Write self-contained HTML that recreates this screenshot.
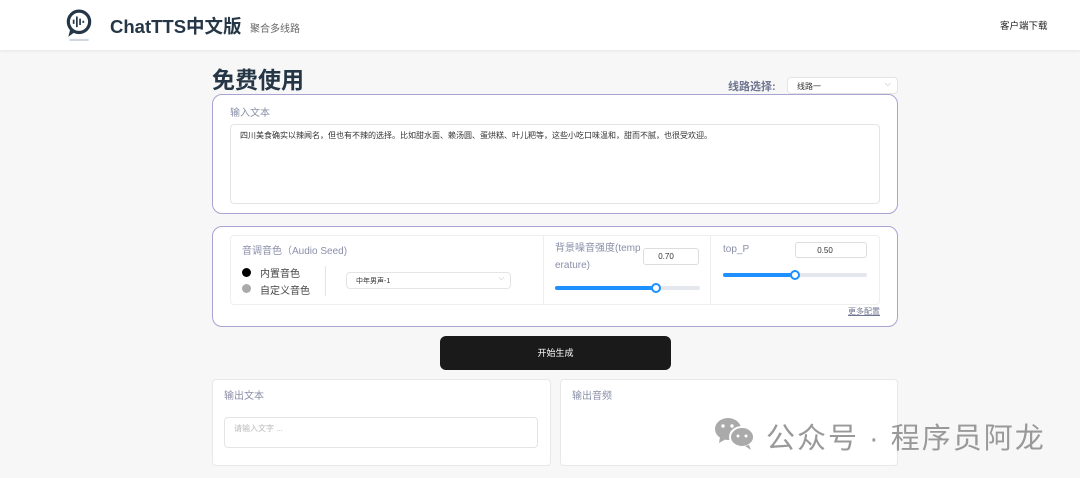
<!DOCTYPE html>
<html><head><meta charset="utf-8"><style>
*{box-sizing:border-box;margin:0;padding:0}
body{width:1080px;height:478px;overflow:hidden;background:#f7f7f7;font-family:"Liberation Sans","Noto Sans CJK SC",sans-serif;position:relative;color:#333}
.abs{position:absolute}
.hdr{left:0;top:0;width:1080px;height:50px;background:#fff;box-shadow:0 1px 3px rgba(0,0,0,.08)}
.card{background:#fff;border:1px solid #a9a4cf;border-radius:10px}
.box{background:#fff;border:1px solid #e4e4e4;border-radius:4px}
.lbl{font-size:10px;color:#8a8fa8}
.track{height:4px;border-radius:2px;background:#e4e7ed}
.fill{height:4px;border-radius:2px;background:#1e90ff}
.knob{width:10px;height:10px;border:2px solid #1e90ff;background:#fff;border-radius:50%}
.num{font-size:8px;border:1px solid #ddd;border-radius:3px;background:#fff;text-align:center;line-height:16px}
</style></head><body>
<div class="abs hdr"></div>
<svg class="abs" style="left:65px;top:9px" width="28" height="32" viewBox="0 0 26 30"><circle cx="13" cy="12" r="10" fill="none" stroke="#253746" stroke-width="3"/><path d="M5 18 L3 26 L10 21" fill="#253746"/><path d="M8 10v4M11 7v10M14 9v6M17 11v2" stroke="#253746" stroke-width="1.6"/><rect x="4" y="28" width="18" height="2" fill="#cfd8e0"/></svg>
<div class="abs" style="left:110px;top:13px;font-size:18.5px;font-weight:bold;color:#253746">ChatTTS中文版</div>
<div class="abs" style="left:250px;top:20px;font-size:10px;color:#666">聚合多线路</div>
<div class="abs" style="left:1000px;top:18px;font-size:9.5px;color:#222">客户端下载</div>
<div class="abs" style="left:212px;top:61px;font-size:23px;font-weight:bold;color:#253746">免费使用</div>
<div class="abs" style="left:728px;top:78px;font-size:11px;font-weight:bold;color:#6f7590">线路选择:</div>
<div class="abs box" style="left:787px;top:77px;width:111px;height:17px;font-size:8px;padding:3px 9px;color:#333">线路一<span style="position:absolute;right:6px;top:1px;color:#aaa">⌵</span></div>
<div class="abs card" style="left:212px;top:94px;width:686px;height:120px"></div>
<div class="abs lbl" style="left:230px;top:104px">输入文本</div>
<div class="abs box" style="left:230px;top:124px;width:650px;height:80px;font-size:8px;padding:5px 9px;color:#333">四川美食确实以辣闻名，但也有不辣的选择。比如甜水面、赖汤圆、蛋烘糕、叶儿粑等，这些小吃口味温和，甜而不腻，也很受欢迎。</div>
<div class="abs card" style="left:212px;top:226px;width:686px;height:101px"></div>
<div class="abs box" style="left:230px;top:235px;width:650px;height:70px;border-color:#eee"></div>
<div class="abs" style="left:543px;top:236px;width:1px;height:68px;background:#eee"></div>
<div class="abs" style="left:710px;top:236px;width:1px;height:68px;background:#eee"></div>
<div class="abs lbl" style="left:242px;top:242px">音调音色（Audio Seed)</div>
<div class="abs" style="left:242px;top:268px;width:9px;height:9px;border-radius:50%;background:#000"></div>
<div class="abs" style="left:242px;top:284px;width:9px;height:9px;border-radius:50%;background:#aaa"></div>
<div class="abs" style="left:260px;top:265px;font-size:10px;color:#444">内置音色</div>
<div class="abs" style="left:260px;top:282px;font-size:10px;color:#444">自定义音色</div>
<div class="abs" style="left:325px;top:266px;width:1px;height:30px;background:#e4e4e4"></div>
<div class="abs box" style="left:346px;top:272px;width:165px;height:17px;font-size:7px;padding:3px 9px">中年男声-1<span style="position:absolute;right:6px;top:2px;color:#aaa">⌵</span></div>
<div class="abs lbl" style="left:555px;top:240px;line-height:17px;width:88px;word-break:break-all">背景噪音强度(temperature)</div>
<div class="abs num" style="left:643px;top:248px;width:56px;height:17px;padding-right:10px">0.70</div>
<div class="abs track" style="left:555px;top:286px;width:145px"></div>
<div class="abs fill" style="left:555px;top:286px;width:101px"></div>
<div class="abs knob" style="left:651px;top:283px"></div>
<div class="abs lbl" style="left:723px;top:244px">top_P</div>
<div class="abs num" style="left:795px;top:242px;width:72px;height:16px;padding-right:12px">0.50</div>
<div class="abs track" style="left:723px;top:273px;width:144px"></div>
<div class="abs fill" style="left:723px;top:273px;width:72px"></div>
<div class="abs knob" style="left:790px;top:270px"></div>
<div class="abs" style="left:848px;top:306px;font-size:8px;color:#6f7590;text-decoration:underline">更多配置</div>
<div class="abs" style="left:440px;top:336px;width:231px;height:34px;background:#1a1a1a;border-radius:6px;color:#fff;font-size:9px;text-align:center;line-height:34px">开始生成</div>
<div class="abs box" style="left:212px;top:379px;width:339px;height:87px;border-color:#e8e8e8"></div>
<div class="abs lbl" style="left:224px;top:387px">输出文本</div>
<div class="abs box" style="left:224px;top:417px;width:314px;height:31px;font-size:8px;color:#bbb;padding:5px 9px">请输入文字 ...</div>
<div class="abs box" style="left:560px;top:379px;width:338px;height:87px;border-color:#e8e8e8"></div>
<div class="abs lbl" style="left:572px;top:387px">输出音频</div>
<svg class="abs" style="left:714px;top:416px" width="44" height="36" viewBox="0 0 44 36"><ellipse cx="14" cy="13" rx="13" ry="11" fill="#aaa"/><path d="M6 21 L5 27 L12 23z" fill="#aaa"/><ellipse cx="28" cy="21" rx="12" ry="10" fill="#aaa" stroke="#fff" stroke-width="2"/><path d="M35 29 L37 34 L31 30z" fill="#aaa"/><circle cx="9" cy="10" r="1.7" fill="#fff"/><circle cx="18" cy="10" r="1.7" fill="#fff"/><circle cx="24" cy="20" r="1.5" fill="#fff"/><circle cx="32" cy="20" r="1.5" fill="#fff"/></svg>
<div class="abs" style="left:766px;top:415px;font-size:29px;color:#999;letter-spacing:2px;white-space:nowrap">公众号 · 程序员阿龙</div>
</body></html>
